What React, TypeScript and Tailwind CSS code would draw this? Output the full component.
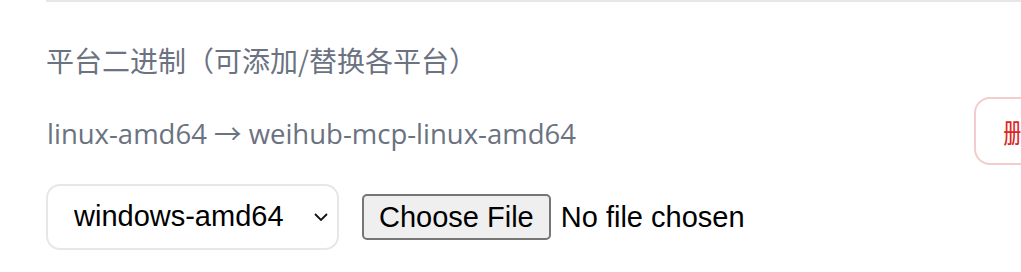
import { FC } from 'react';

const platforms = ['windows-amd64', 'linux-amd64', 'darwin-arm64', 'darwin-amd64'];

const App: FC = () => {
  return (
    <div className="w-[1021px] h-[272px] overflow-hidden bg-white pl-[46px]">
      <div className="w-[1038px] border-t-2 border-[#e5e7eb]">
        {/* Section title */}
        <h3 className="pt-[38px] text-[28px] leading-[40px] font-normal text-[#6b7280] font-['Noto_Sans_CJK_SC',sans-serif]">
          平台二进制（可添加/替换各平台）
        </h3>

        {/* Existing binary row */}
        <div className="mt-[17px] flex items-center justify-between h-[68px]">
          <span className="pl-px pt-[5px] text-[27.5px] text-[#6b7280] font-['Open_Sans','Noto_Sans_CJK_SC',sans-serif]">
            linux-amd64 → weihub-mcp-linux-amd64
          </span>
          <button className="h-[68px] px-[27px] rounded-[16px] border-2 border-[#f3cccc] text-[26px] text-[#dc2626] font-['Noto_Sans_CJK_SC',sans-serif]">
            删除
          </button>
        </div>

        {/* Upload row */}
        <div className="mt-[19px] flex items-center gap-[23px]">
          <div className="relative w-[293px] h-[66px]">
            <select
              defaultValue="windows-amd64"
              className="w-full h-full appearance-none rounded-[14px] border-2 border-[#e5e7eb] bg-white pl-[26px] text-[29px] text-black font-['Liberation_Sans',sans-serif] outline-none"
            >
              {platforms.map((p) => (
                <option key={p} value={p}>
                  {p}
                </option>
              ))}
            </select>
            <svg
              className="pointer-events-none absolute left-[268px] top-[29px]"
              width="14"
              height="9"
              viewBox="0 0 14 9"
              fill="none"
            >
              <path d="M1 1l6 6 6-6" stroke="#111" strokeWidth="1.8" />
            </svg>
          </div>
          <input
            type="file"
            className="w-[440px] text-[29px] text-black font-['Liberation_Sans',sans-serif] file:mr-[10px] file:h-[46px] file:px-[15px] file:border-2 file:border-[#767676] file:rounded-[5px] file:bg-[#efefef] file:text-black"
          />
        </div>
      </div>
    </div>
  );
};

export default App;
